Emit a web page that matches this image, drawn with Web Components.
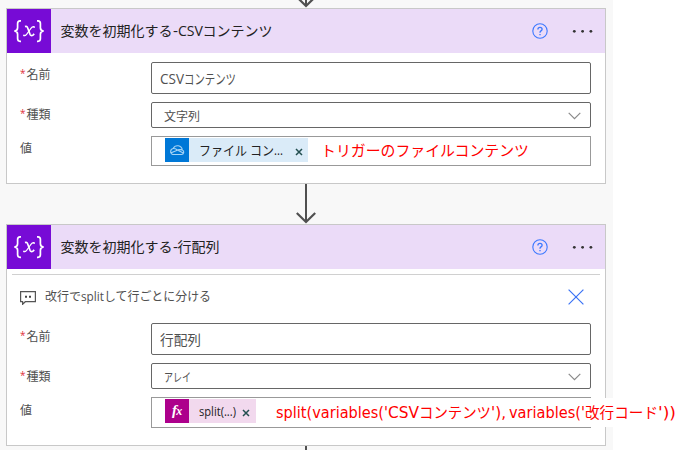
<!DOCTYPE html>
<html lang="ja"><head><meta charset="utf-8"><title>フロー</title>
<style>
body{margin:0;background:#fff;width:676px;height:450px;overflow:hidden;font-family:"Open Sans","Noto Sans CJK JP",sans-serif;color:#333}
</style></head><body>
<flow-canvas>
  <flow-arrow size="8"></flow-arrow>
  <action-card style="--shift:.5px">
    <text-run slot="title" w="112">変数を初期化する</text-run><text-run slot="title" w="5">-</text-run><text-run slot="title" w="25">CSV</text-run><text-run slot="title" w="70">コンテンツ</text-run>
    <field-row label="名前" required kind="input"><text-run w="24">CSV</text-run><text-run w="52">コンテンツ</text-run></field-row>
    <field-row label="種類" required kind="select"><text-run w="36">文字列</text-run></field-row>
    <field-row label="値" kind="value" style="--h:30px"><token-chip kind="file" style="--w:143px"><text-run w="48">ファイル</text-run><text-run w="3">&nbsp;</text-run><text-run w="24">コン</text-run><text-run w="9">...</text-run></token-chip><red-note style="--x:169px;--w:220px"><text-run w="208">トリガーのファイルコンテンツ</text-run></red-note></field-row>
  </action-card>
  <flow-arrow size="40"></flow-arrow>
  <action-card style="--tail:17px;--shift:1.5px">
    <text-run slot="title" w="112">変数を初期化する</text-run><text-run slot="title" w="5">-</text-run><text-run slot="title" w="42">行配列</text-run>
    <comment-row slot="comment"><text-run w="36">改行で</text-run><text-run w="23">split</text-run><text-run w="107">して行ごとに分ける</text-run></comment-row>
    <field-row label="名前" required kind="input"><text-run w="41">行配列</text-run></field-row>
    <field-row label="種類" required kind="select"><text-run w="27">アレイ</text-run></field-row>
    <field-row label="値" kind="value" style="--h:31px"><token-chip kind="fx" style="--w:91px"><text-run w="37">split(...)</text-run></token-chip><red-note style="--x:124px;--w:401px"><text-run w="112">split(variables('</text-run><text-run w="31">CSV</text-run><text-run w="72">コンテンツ</text-run><text-run w="15">'),</text-run><text-run w="3">&nbsp;</text-run><text-run w="76">variables('</text-run><text-run w="73">改行コード</text-run><text-run w="18">'))</text-run></red-note></field-row>
  </action-card>
  <flow-arrow size="4" line></flow-arrow>
</flow-canvas>
<script>
const define=(name,html,init)=>{
  const t=document.createElement('template');t.innerHTML=html;
  customElements.define(name,class extends HTMLElement{
    connectedCallback(){
      if(this.shadowRoot)return;
      const r=this.attachShadow({mode:'open'});
      r.append(t.content.cloneNode(true));
      if(init)init(this,r);
    }
  });
};

define('flow-canvas',`<style>:host{display:flex;flex-direction:column;width:613px;height:450px;background:#f8f8f8;box-sizing:border-box;padding-left:6px}</style><slot></slot>`);

define('flow-arrow',`<style>:host{display:block;flex:none;width:600px}svg{display:block;margin-left:288px}</style><svg width="24" fill="none" stroke="#505050"></svg>`,(el,r)=>{
  const h=+el.getAttribute('size'),s=r.querySelector('svg');
  s.setAttribute('height',h);
  const line=`<path stroke-width="2" d="M12 0V${el.hasAttribute('line')?h:h-2}"/>`;
  s.innerHTML=line+(el.hasAttribute('line')?'':`<path stroke-width="2.2" d="M2.8 ${h-11}L12 ${h-2}L21.2 ${h-11}"/>`);
});

define('action-card',`<style>
:host{display:flex;flex-direction:column;flex:none;box-sizing:border-box;width:600px;border:1px solid #c8c8c8;background:#fff;padding-bottom:var(--tail,17px)}
header{display:flex;align-items:center;height:44px;background:#ebdbf8}
.icon{width:44px;height:44px;background:#770bd6;flex:none}
.title{flex:1;padding-left:9.5px;font-size:14px;line-height:44px;color:#222;white-space:nowrap;display:flex}
.help{margin-right:24px}.dots{margin-right:12px}
svg{display:block}
.rows{display:flex;flex-direction:column;gap:8px;padding:9px 14px 0 13px}
</style><header>
<svg class="icon" viewBox="0 0 44 44" fill="none" stroke="#fff" stroke-width="1.7"><path d="M14 11.8h-1q-2.4 0-2.4 2.7v4.3q0 3-3.3 3.2q3.3.2 3.3 3.2v4.4q0 2.7 2.4 2.7h1M30 11.8h1q2.4 0 2.4 2.7v4.3q0 3 3.3 3.2q-3.3.2-3.3 3.2v4.4q0 2.7-2.4 2.7h-1"/><path stroke-width="1.7" d="M18 17.6q1.9-.8 2.7 1.4l2.3 6.2q.9 2.2 3 .9l1.2-1.3"/><path stroke-width="1.1" d="M27.3 17.8q-1.8-.7-3.4 1.6l-4.1 5.7q-1.7 2.3-3.2 1.5"/><circle cx="27.1" cy="18.1" r=".9" fill="#fff" stroke="none"/><circle cx="17" cy="26.3" r=".9" fill="#fff" stroke="none"/></svg>
<div class="title"><slot name="title"></slot></div>
<svg class="help" width="16" height="16" fill="none" stroke="#3b78ff" stroke-width="1.1"><circle cx="8" cy="8" r="7.2"/><path stroke-width="1.3" d="M5.9 6.5Q5.9 4.4 8 4.4T10.1 6.3Q10.1 7.2 9 7.9T8 9.7M8 10.9v1.3"/></svg>
<svg class="dots" width="21" height="6" fill="#333"><circle cx="2.3" cy="3.3" r="1.4"/><circle cx="10.6" cy="3.3" r="1.4"/><circle cx="18.9" cy="3.3" r="1.4"/></svg>
</header><slot name="comment"></slot><div class="rows"><slot></slot></div>`);

define('comment-row',`<style>
:host{display:block;padding:5px 5px 0}
div{border-top:1px solid #d0d0d0;display:flex;align-items:center;height:36px;padding:3px 16px 0 7.5px;font-size:12.5px;color:#505050}
.t{display:flex;flex:1;margin-left:9px;line-height:24px;margin-top:2px}
svg{flex:none}
</style><div><svg width="16" height="14" fill="none" stroke="#555" stroke-width="1.2" style="margin-top:3px"><path d="M.6.7h14.8v10H5.3l-2.7 2.6v-2.6h-2z"/><path stroke="none" fill="#444" d="M5 4.7h2v2H5zM9 4.7h2v2H9z"/></svg><span class="t"><slot></slot></span><svg width="16" height="16" stroke="#3b73f5" stroke-width="1.2" style="margin-top:2px"><path d="M.6.6l14.8 14.8M15.4.6L.6 15.4"/></svg></div>`);

define('field-row',`<style>
:host{display:flex;align-items:flex-start}
.label{display:flex;width:131px;flex:none;font-size:12px;line-height:24px;color:#505050;white-space:nowrap;padding-top:var(--shift,0px);height:22px}
.star{color:#e0303c;width:6.5px;font-size:10px;line-height:21px}
.box{display:flex;align-items:center;box-sizing:border-box;flex:1;border:1px solid #666;border-radius:2px;position:relative;white-space:nowrap;color:#505050}
.input{height:32px;padding-left:8px;font-size:14px}
.select{height:26px;padding-left:12px;font-size:12px;padding-top:2px}
.value{height:var(--h);border-color:#999;border-radius:0;padding-left:13px;align-items:flex-start;padding-top:1px}
svg{margin-left:auto;margin-right:9px;display:none}.select svg{display:block}
</style><div class="label"></div><div class="box"><slot></slot><svg width="13" height="8" fill="none" stroke="#8a8a8a" stroke-width="1.2"><path d="M.7.8l5.8 5.8L12.3.8"/></svg></div>`,(el,r)=>{
  const l=r.querySelector('.label');
  l.innerHTML=(el.hasAttribute('required')?'<span class="star">*</span>':'')+'<span></span>';
  l.lastChild.textContent=el.getAttribute('label');
  r.querySelector('.box').classList.add(el.getAttribute('kind'));
});

define('token-chip',`<style>
:host{display:flex;align-items:center;width:var(--w);height:24px;background:#daebf8;font-size:13px;color:#222}
:host([kind=fx]){background:#f2d9ee;font-size:12.5px}
.i{width:24px;height:24px;flex:none;margin-right:9.5px}
.t{display:flex;line-height:24px;flex:1}
.x{margin-right:5px;margin-top:3px}:host([kind=fx]) .x{margin-right:6px}
:host([kind=fx]) .t{padding-top:1px}
</style><svg class="i" viewBox="0 0 24 24" fill="none"></svg><span class="t"><slot></slot></span><svg class="x" width="8" height="8" stroke="#234f50" stroke-width="1.5"><path d="M1 1l6 6M7 1L1 7"/></svg>`,(el,r)=>{
  const fx=el.getAttribute('kind')==='fx',i=r.querySelector('.i');
  i.style.background=fx?'#ad008c':'#0078d7';
  i.innerHTML=fx
   ?'<text y="16" font-family="Liberation Serif" font-style="italic" font-weight="bold" fill="#fff"><tspan x="7" font-size="15">f</tspan><tspan x="11.3" font-size="12">x</tspan></text>'
   :'<path stroke="#a7d4f5" stroke-width="1.1" d="M7.8 16.5h8.6a2.4 2.4 0 0 0 .9-4.6A4.8 4.8 0 0 0 8.2 10.5A3.1 3.1 0 0 0 7.8 16.5ZM8.2 10.5q2.2-.1 3.8 1.2l6.2 3.3M5.7 15l5.3-2.3q2.7-1.6 6.3-.8"/>';
});

define('red-note',`<style>
:host{position:absolute;left:var(--x);top:0;width:var(--w);height:calc(var(--h) - 2px);display:flex;align-items:center;background:#fff;color:#f00;font:15px/28px "DejaVu Sans","Noto Sans CJK JP",sans-serif;z-index:1}
</style><slot></slot>`);

/* A run of text condensed or widened to an exact advance width. */
define('text-run',`<style>:host{display:block;flex:none;white-space:pre}span{display:inline-block;transform-origin:0 50%}</style><span><slot></slot></span>`,el=>{
  el.style.width=el.getAttribute('w')+'px';
});
/* Measure once every ancestor has its shadow root and styles. */
for(const el of document.querySelectorAll('text-run')){
  const s=el.shadowRoot.querySelector('span'),n=s.getBoundingClientRect().width;
  if(n)s.style.transform='scaleX('+(+el.getAttribute('w')/n)+')';
}
</script></body></html>
